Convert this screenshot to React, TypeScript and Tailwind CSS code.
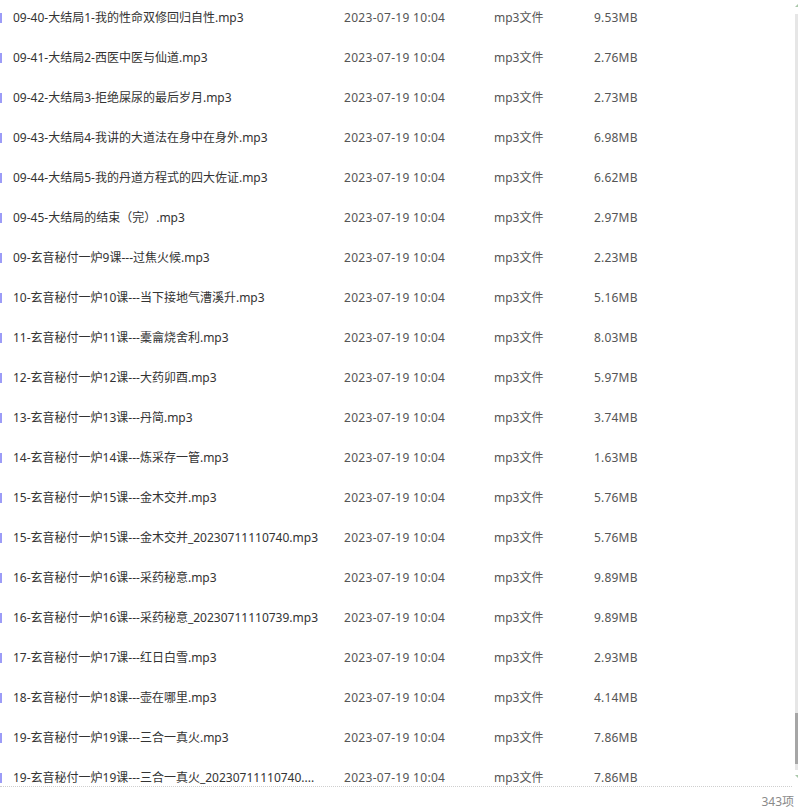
import React from "react";

const rows: [string, string][] = [
  ["09-40-大结局1-我的性命双修回归自性.mp3", "9.53MB"],
  ["09-41-大结局2-西医中医与仙道.mp3", "2.76MB"],
  ["09-42-大结局3-拒绝屎尿的最后岁月.mp3", "2.73MB"],
  ["09-43-大结局4-我讲的大道法在身中在身外.mp3", "6.98MB"],
  ["09-44-大结局5-我的丹道方程式的四大佐证.mp3", "6.62MB"],
  ["09-45-大结局的结束（完）.mp3", "2.97MB"],
  ["09-玄音秘付一炉9课---过焦火候.mp3", "2.23MB"],
  ["10-玄音秘付一炉10课---当下接地气漕溪升.mp3", "5.16MB"],
  ["11-玄音秘付一炉11课---橐龠烧舍利.mp3", "8.03MB"],
  ["12-玄音秘付一炉12课---大药卯酉.mp3", "5.97MB"],
  ["13-玄音秘付一炉13课---丹简.mp3", "3.74MB"],
  ["14-玄音秘付一炉14课---炼采存一管.mp3", "1.63MB"],
  ["15-玄音秘付一炉15课---金木交并.mp3", "5.76MB"],
  ["15-玄音秘付一炉15课---金木交并_20230711110740.mp3", "5.76MB"],
  ["16-玄音秘付一炉16课---采药秘意.mp3", "9.89MB"],
  ["16-玄音秘付一炉16课---采药秘意_20230711110739.mp3", "9.89MB"],
  ["17-玄音秘付一炉17课---红日白雪.mp3", "2.93MB"],
  ["18-玄音秘付一炉18课---壶在哪里.mp3", "4.14MB"],
  ["19-玄音秘付一炉19课---三合一真火.mp3", "7.86MB"],
  ["19-玄音秘付一炉19课---三合一真火_20230711110740....", "7.86MB"],
];

function Scrollbar() {
  return (
    <div className="w-[6px] flex flex-col items-end pt-[4px] pb-[9px]">
      <div className="w-0 h-0 border-l-[3px] border-l-transparent border-b-[3px] border-b-[#a9c8a9]" />
      <div className="flex-1 w-[3px] mt-[7px] mb-[5px] bg-[#e6e6e6] flex flex-col justify-end pb-[6px]">
        <div className="w-[3px] h-[51px] bg-[#a6a6a6]" />
      </div>
      <div className="w-0 h-0 border-l-[3px] border-l-transparent border-t-[3px] border-t-[#a9c8a9]" />
    </div>
  );
}

export default function App() {
  return (
    <div
      className="flex flex-col w-[798px] h-[811px] bg-white overflow-hidden text-[12px] text-[#333]"
      style={{ fontFamily: '"Noto Sans", "Noto Sans CJK SC", sans-serif' }}
    >
      <div className="flex h-[787px]">
        <div className="flex-1 overflow-hidden border-b border-dotted border-[#cfcfcf]">
          <div className="flex flex-col -mt-[2px]">
            {rows.map(([name, size], i) => (
              <div key={i} className="flex items-center h-[40px] leading-[16px]">
                <div className="w-[2px] h-[10px] bg-[#9c9cf7] shrink-0" />
                <div className="w-[342px] pl-[11px] whitespace-nowrap overflow-hidden">{name}</div>
                <div className="w-[150px] text-[#555] tracking-[0.3px]">2023-07-19 10:04</div>
                <div className="w-[100px] text-[#555]">mp3文件</div>
                <div className="text-[#555] tracking-[0.2px]">{size}</div>
              </div>
            ))}
          </div>
        </div>
        <Scrollbar />
      </div>
      <div className="flex-1 flex items-start justify-end pt-[7px] pr-[4px] text-[#8a8a8a] leading-[16px]">343项</div>
    </div>
  );
}
